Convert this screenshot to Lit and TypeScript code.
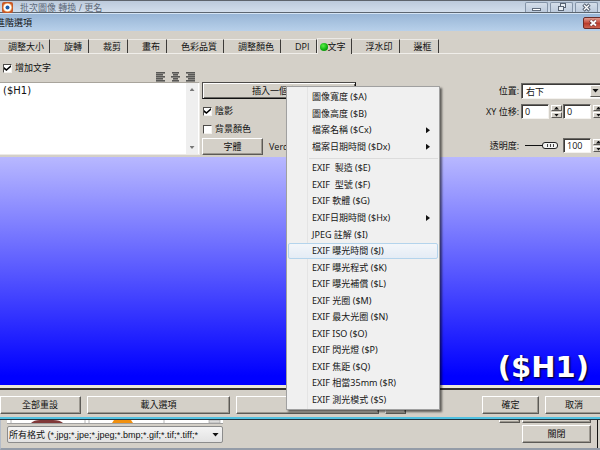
import { LitElement, html, css, svg } from "lit";
import { customElement, property, state } from "lit/decorators.js";
import { classMap } from "lit/directives/class-map.js";

interface MenuEntry {
  text: string;
  sub?: boolean;
  current?: boolean;
}

const IMAGE_ENTRIES: MenuEntry[] = [
  { text: "圖像寬度 ($A)" },
  { text: "圖像高度 ($B)" },
  { text: "檔案名稱 ($Cx)", sub: true },
  { text: "檔案日期時間 ($Dx)", sub: true },
];

const EXIF_ENTRIES: MenuEntry[] = [
  { text: "EXIF  製造 ($E)" },
  { text: "EXIF  型號 ($F)" },
  { text: "EXIF 軟體 ($G)" },
  { text: "EXIF日期時間 ($Hx)", sub: true },
  { text: "JPEG 註解 ($I)" },
  { text: "EXIF 曝光時間 ($J)", current: true },
  { text: "EXIF 曝光程式 ($K)" },
  { text: "EXIF 曝光補償 ($L)" },
  { text: "EXIF 光圈 ($M)" },
  { text: "EXIF 最大光圈 ($N)" },
  { text: "EXIF ISO ($O)" },
  { text: "EXIF 閃光燈 ($P)" },
  { text: "EXIF 焦距 ($Q)" },
  { text: "EXIF 相當35mm ($R)" },
  { text: "EXIF 測光模式 ($S)" },
];

const TABS = ["調整大小", "旋轉", "裁剪", "畫布", "色彩品質", "調整顏色", "DPI", "文字", "浮水印", "邊框"];

const base = css`
  * {
    box-sizing: border-box;
  }
  button,
  input,
  select,
  textarea {
    font: inherit;
    color: inherit;
    margin: 0;
    padding: 0;
    border-radius: 0;
    outline: none;
  }
  .push {
    background: #d4d0c8;
    border: 1px solid;
    border-color: #fff #5c5a56 #5c5a56 #fff;
    box-shadow: inset -1px -1px #9c9890;
    text-align: center;
    white-space: nowrap;
    line-height: 14px;
  }
  .field {
    background: #fff;
    border: 1px solid;
    border-color: #6c6a66 #f4f2ee #f4f2ee #6c6a66;
    box-shadow: inset 1px 1px #3c3a38;
  }
`;

@customElement("variable-menu")
export class VariableMenu extends LitElement {
  static styles = [
    base,
    css`
      :host {
        display: flex;
        flex-direction: column;
        width: 154px;
        height: 324px;
        padding: 2px 1px 1px;
        background: #f0f0f0;
        border: 1px solid #a0a0a0;
        box-shadow: 2px 2px 2px rgba(0, 0, 0, 0.55);
        background-image: linear-gradient(#e4e4e4, #e4e4e4);
        background-size: 1px 100%;
        background-position: 20px 0;
        background-repeat: no-repeat;
      }
      .item {
        flex: 1 1 0;
        min-height: 0;
        display: flex;
        align-items: center;
        justify-content: space-between;
        padding: 0 7px 0 23px;
        border: 1px solid transparent;
        border-radius: 2px;
        background: none;
        text-align: left;
        white-space: pre;
        font: 9px/14px "Noto Sans", "Noto Sans CJK TC", sans-serif;
        color: #161616;
      }
      .current {
        border-color: #b4d4ec;
        background: linear-gradient(#f3f6fa, #e4ecf5);
      }
      .rule {
        flex: none;
        height: 5px;
        margin: 0 0 0 21px;
        border: 0;
        background: linear-gradient(#dcdcdc, #dcdcdc) 0 3px / 100% 1px no-repeat;
      }
      .more {
        width: 4px;
        height: 6px;
        background: #111;
        clip-path: polygon(0 0, 100% 50%, 0 100%);
      }
    `,
  ];

  private entry(e: MenuEntry) {
    return html`<button role="menuitem" class=${classMap({ item: true, current: !!e.current })}>
      <span>${e.text}</span>${e.sub ? html`<span class="more"></span>` : ""}
    </button>`;
  }

  render() {
    return html`${IMAGE_ENTRIES.map((e) => this.entry(e))}
      <hr class="rule" />
      ${EXIF_ENTRIES.map((e) => this.entry(e))}`;
  }
}

@customElement("spin-box")
export class SpinBox extends LitElement {
  @property() value = "0";
  @property() label = "";

  static styles = [
    base,
    css`
      :host {
        display: flex;
        align-items: center;
        gap: 2px;
      }
      .value {
        width: 28px;
        height: 15px;
        padding: 0 3px;
      }
      .arrows {
        display: flex;
        flex-direction: column;
        gap: 1px;
      }
      .step {
        display: grid;
        place-items: center;
        width: 11px;
        height: 6px;
        background: #d4d0c8;
        border: 1px solid;
        border-color: #fff #5c5a56 #5c5a56 #fff;
      }
      .tri {
        width: 5px;
        height: 3px;
        background: #111;
        clip-path: polygon(50% 0, 100% 100%, 0 100%);
      }
      .down {
        clip-path: polygon(0 0, 100% 0, 50% 100%);
      }
    `,
  ];

  render() {
    return html`<input class="field value" aria-label=${this.label} .value=${this.value} />
      <div class="arrows">
        <button class="step" aria-label="+"><span class="tri"></span></button>
        <button class="step" aria-label="-"><span class="tri down"></span></button>
      </div>`;
  }
}

@customElement("app-root")
export class AppRoot extends LitElement {
  @state() private active = "文字";

  static styles = [
    base,
    css`
      :host {
        display: flex;
        flex-direction: column;
        height: 100vh;
        min-height: 420px;
        overflow: hidden;
        background: #d4d0c8;
        color: #111;
        font: 9px/14px "Open Sans", "Noto Sans CJK TC", sans-serif;
      }
      .owner-bar {
        flex: none;
        display: flex;
        height: 13px;
        padding: 1px 2px 0;
        border-top: 1px solid #5e646c;
        border-bottom: 1px solid #5c6670;
        background: linear-gradient(#bccadb, #d2deec);
        color: #5c6878;
      }
      .owner-title {
        flex: 1;
        margin-left: 7px;
        line-height: 11px;
        white-space: nowrap;
      }
      .logo {
        flex: none;
        width: 11px;
        height: 11px;
      }
      .frame-buttons {
        display: flex;
        gap: 2px;
      }
      .frame-button {
        display: grid;
        place-items: center;
        width: 23px;
        height: 10px;
        border: 1px solid #8494a8;
        border-bottom: 0;
        border-radius: 2px 2px 0 0;
        background: linear-gradient(#d4deea, #bccadc);
      }
      .title-bar {
        flex: none;
        display: flex;
        align-items: center;
        justify-content: space-between;
        height: 18px;
        border-top: 1px solid #d4e4f4;
        background: linear-gradient(#98b6d6, #b8d0ea);
      }
      .title {
        margin-left: -4px;
      }
      .close {
        display: grid;
        place-items: center;
        width: 20px;
        height: 12px;
        margin-right: -3px;
        border: 1px solid #6c2c28;
        border-radius: 2px;
        background: linear-gradient(#e09c90, #c44838 50%, #b83828 50%, #cc6450);
      }
      .tabs {
        flex: none;
        display: flex;
        align-items: flex-end;
        height: 23px;
        box-shadow: inset 0 -1px #f0eeea;
      }
      .tab {
        height: 14px;
        margin-bottom: 1px;
        padding: 0 6px 0 14px;
        border: 0 solid;
        border-width: 1px 1px 0 0;
        border-color: #eceae6 #3c3a38 #3c3a38 #eceae6;
        background: none;
        line-height: 13px;
        white-space: nowrap;
      }
      .tab:first-child {
        padding: 0 5px 0 8px;
      }
      .tab.active {
        display: flex;
        align-items: center;
        height: 16px;
        margin-bottom: 0;
        padding: 0 5px 0 2px;
        border-left-width: 1px;
        background: #d4d0c8;
      }
      .dot {
        width: 8px;
        height: 8px;
        border-radius: 50%;
        background: radial-gradient(circle at 40% 35%, #5cf048, #10b010 55%, #087808);
      }
      .panel {
        flex: none;
        display: flex;
        gap: 2px;
        height: 103px;
        margin-right: -3px;
      }
      .text-column {
        flex: none;
        display: flex;
        flex-direction: column;
        width: 200px;
      }
      .text-head {
        display: flex;
        justify-content: space-between;
        align-items: flex-end;
        height: 28px;
        padding: 0 4px 0 3px;
      }
      .aligns {
        display: flex;
        gap: 5px;
      }
      .align {
        display: grid;
        width: 10px;
        height: 10px;
        border: 0;
        background: none;
      }
      .check {
        display: flex;
        align-items: center;
        gap: 3px;
        height: 18px;
      }
      .text-head .check {
        align-self: center;
      }
      .check input {
        appearance: none;
        display: grid;
        place-items: center;
        width: 9px;
        height: 9px;
        background: #fff;
        border: 1px solid;
        border-color: #4c4a48 #f4f2ee #f4f2ee #4c4a48;
      }
      .check input:checked::before {
        content: "";
        width: 7px;
        height: 6px;
        background: #000;
        clip-path: polygon(0 35%, 35% 65%, 100% 0, 100% 35%, 35% 100%, 0 70%);
      }
      .editor {
        display: flex;
        height: 73px;
        background: #fff;
        border: 1px solid;
        border-color: #a8a49c #eceae6 #eceae6;
        border-left: 0;
      }
      .editor textarea {
        flex: 1;
        min-width: 0;
        padding: 1px 3px;
        border: 0;
        background: #fff;
        resize: none;
        overflow: hidden;
        font: 10px/14px "DejaVu Sans", sans-serif;
      }
      .bar {
        display: flex;
        flex-direction: column;
        justify-content: space-between;
        align-items: center;
        width: 12px;
        margin-right: 1px;
        padding: 5px 0;
        background: #efefef;
      }
      .bar-arrow {
        width: 5px;
        height: 3px;
        background: #777;
        clip-path: polygon(50% 0, 100% 100%, 0 100%);
      }
      .bar-arrow.down {
        clip-path: polygon(0 0, 100% 0, 50% 100%);
      }
      .style-column {
        flex: none;
        width: 154px;
        padding-top: 28px;
      }
      .insert {
        position: relative;
        margin-bottom: 3px;
      }
      .insert-button {
        display: block;
        width: 100%;
        height: 17px;
        border-color: #4c4a48 #111 #111 #4c4a48;
        box-shadow: inset 1px 1px #fff, inset -1px -1px #6c6a66;
      }
      .insert variable-menu {
        position: absolute;
        left: 84px;
        top: 4px;
        z-index: 2;
      }
      .style-column .check {
        padding-left: 1px;
      }
      .font-row {
        display: flex;
        align-items: center;
        gap: 6px;
      }
      .font-button {
        width: 61px;
        height: 17px;
      }
      .place-grid {
        display: grid;
        grid-template-columns: auto 40px 40px;
        grid-template-rows: 15px 15px 15px;
        justify-items: start;
        align-items: center;
        align-content: start;
        gap: 6px 2px;
        margin-left: auto;
        padding-top: 29px;
      }
      .place-grid .name {
        justify-self: end;
      }
      .place-grid .last {
        margin-top: 26px;
      }
      .position {
        grid-column: span 2;
        display: flex;
        width: 100%;
        height: 16px;
        padding: 1px;
      }
      .position select {
        flex: 1;
        min-width: 0;
        appearance: none;
        border: 0;
        padding: 0 3px;
        background: none;
      }
      .drop {
        display: grid;
        place-items: center;
        width: 11px;
        background: #d4d0c8;
        border: 1px solid;
        border-color: #fff #5c5a56 #5c5a56 #fff;
        pointer-events: none;
      }
      .drop-arrow {
        width: 7px;
        height: 4px;
        background: #111;
        clip-path: polygon(0 0, 100% 0, 50% 100%);
      }
      .opacity {
        appearance: none;
        width: 33px;
        height: 8px;
        margin-left: 4px;
        background: linear-gradient(#111, #111) 0 3px / 100% 1px no-repeat;
      }
      .opacity::-webkit-slider-thumb {
        appearance: none;
        width: 16px;
        height: 7px;
        border: 1px solid #222;
        border-radius: 3px;
        background: repeating-linear-gradient(90deg, #444 0 1px, #eee 1px 3px) 4px 1px / 7px 3px no-repeat #f4f4f2;
      }
      .preview {
        flex: 1;
        min-height: 0;
        display: flex;
        align-items: flex-end;
        justify-content: flex-end;
        padding: 0 11px 0 0;
        background: linear-gradient(#b8b8ff, #0000ff 96%);
        color: #fff;
        font: bold 29px/36px "DejaVu Sans", sans-serif;
        text-shadow: 1px 1px 2px #000;
      }
      .actions {
        flex: none;
        display: flex;
        gap: 6px;
        height: 35px;
        margin-right: -3px;
        padding-top: 11px;
        border-bottom: 1px solid #203440;
        background: linear-gradient(#ece9d8 0 3px, #35332f 3px 5px, #d4d0c8 5px);
        box-shadow: inset 0 -2px #50c0e0;
      }
      .actions .push {
        height: 18px;
      }
      .reset {
        width: 81px;
        padding-right: 1px;
      }
      .wide {
        width: 143px;
      }
      .small {
        width: 21px;
      }
      .ok {
        width: 57px;
        margin-left: auto;
      }
      .cancel {
        width: 58px;
      }
      .owner-foot {
        flex: none;
        display: flex;
        justify-content: space-between;
        height: 30px;
        padding: 0 7px 0 6px;
        border-bottom: 2px solid #949ca8;
        border-left: 1px solid #b4bcc8;
        box-shadow: inset -2px 0 #d4d0c8, inset -3px 0 #111;
      }
      .thumbs {
        display: flex;
        justify-content: space-around;
        width: 216px;
        height: 4px;
        background: #fff;
        border-bottom: 1px solid #a0a0a0;
      }
      .thumbs svg {
        width: 100%;
        height: 3px;
      }
      .filter {
        display: flex;
        align-items: center;
        width: 216px;
        height: 17px;
        margin-top: 2px;
        padding-right: 3px;
        border: 1px solid #8c8c8c;
        border-radius: 2px;
        background: linear-gradient(#f4f4f4, #e2e2e2);
      }
      .filter select {
        flex: 1;
        min-width: 0;
        appearance: none;
        border: 0;
        padding: 0 1px;
        background: none;
        font: 9px/14px "Liberation Sans", "Noto Sans CJK TC", sans-serif;
      }
      .foot-buttons {
        display: grid;
        grid-template-columns: 21px 69px;
        grid-template-rows: 3px 18px;
        gap: 2px;
        padding-right: 2px;
      }
      .stub {
        min-height: 0;
        height: 3px;
        border-top: 0;
      }
      .quit {
        grid-column: 2;
      }
    `,
  ];

  private alignIcon(starts: number[], widths: number[]) {
    return html`<svg width="10" height="10" viewBox="0 0 10 10" fill="#585856">
      ${starts.map((x, i) => svg`<rect x=${x} y=${i * 2} width=${widths[i]} height="1.6" />`)}
    </svg>`;
  }

  render() {
    return html`
      <header class="owner-bar">
        <svg class="logo" viewBox="0 0 11 11">
          <rect width="11" height="11" rx="2" fill="#c85828" />
          <circle cx="5.5" cy="5.5" r="4.6" fill="#f0b070" />
          <circle cx="5.5" cy="5.5" r="3.7" fill="#fff" />
          <circle cx="5.5" cy="5.5" r="2" fill="#1c5ca8" />
        </svg>
        <span class="owner-title">批次圖像 轉換 / 更名</span>
        <div class="frame-buttons">
          <button class="frame-button" aria-label="最小化">
            <svg width="9" height="9"><rect x="0.5" y="5.5" width="8" height="2" fill="#fff" stroke="#606c7c" /></svg>
          </button>
          <button class="frame-button" aria-label="還原">
            <svg width="10" height="9" fill="#e8eef4" stroke="#566272">
              <rect x="3.5" y="0.5" width="5" height="4" /><rect x="1.5" y="3.5" width="5" height="4" />
            </svg>
          </button>
          <button class="frame-button" aria-label="關閉視窗">
            <svg width="9" height="9">
              <path d="M1.5 1.5 7.5 7.5M7.5 1.5 1.5 7.5" stroke="#566272" stroke-width="3.4" />
              <path d="M2 2 7 7M7 2 2 7" stroke="#fff" stroke-width="1.3" />
            </svg>
          </button>
        </div>
      </header>

      <div class="title-bar">
        <span class="title">進階選項</span>
        <button class="close" aria-label="關閉對話方塊">
          <svg width="9" height="8">
            <path d="M1 1.5 7 6.5M7 1.5 1 6.5" stroke="#6c3838" stroke-width="3" />
            <path d="M1.5 1.5 7 6.5M7 1.5 1.5 6.5" stroke="#fff" stroke-width="1.8" />
          </svg>
        </button>
      </div>

      <nav class="tabs" role="tablist">
        ${TABS.map(
          (t) => html`<button
            role="tab"
            class=${classMap({ tab: true, active: t === this.active })}
            @click=${() => (this.active = t)}
          >
            ${t === this.active ? html`<span class="dot"></span>` : ""}<span>${t}</span>
          </button>`
        )}
      </nav>

      <section class="panel">
        <div class="text-column">
          <div class="text-head">
            <label class="check"><input type="checkbox" checked />增加文字</label>
            <div class="aligns">
              <button class="align" aria-label="靠左">${this.alignIcon([0, 0, 0, 0, 0], [9, 7, 9, 7, 9])}</button>
              <button class="align" aria-label="置中">${this.alignIcon([1, 2, 0, 2, 1], [7, 5, 9, 5, 7])}</button>
              <button class="align" aria-label="靠右">${this.alignIcon([0, 2, 0, 2, 0], [9, 7, 9, 7, 9])}</button>
            </div>
          </div>
          <div class="editor">
            <textarea aria-label="文字" .value=${"($H1)"}></textarea>
            <div class="bar"><span class="bar-arrow"></span><span class="bar-arrow down"></span></div>
          </div>
        </div>

        <div class="style-column">
          <div class="insert">
            <button class="push insert-button" aria-haspopup="menu">插入一個變數</button>
            <variable-menu role="menu"></variable-menu>
          </div>
          <label class="check"><input type="checkbox" checked />陰影</label>
          <label class="check"><input type="checkbox" />背景顏色</label>
          <div class="font-row"><button class="push font-button">字體</button><span>Verdana</span></div>
        </div>

        <div class="place-grid">
          <label class="name" for="position">位置:</label>
          <div class="field position">
            <select id="position"><option>右下</option></select>
            <span class="drop"><span class="drop-arrow"></span></span>
          </div>
          <span class="name">XY 位移:</span>
          <spin-box label="X 位移" value="0"></spin-box>
          <spin-box label="Y 位移" value="0"></spin-box>
          <label class="name last" for="opacity">透明度:</label>
          <input class="opacity last" id="opacity" type="range" min="0" max="100" value="100" />
          <spin-box class="last" label="透明度" value="100"></spin-box>
        </div>
      </section>

      <div class="preview">($H1)</div>

      <div class="actions">
        <button class="push reset">全部重設</button>
        <button class="push wide">載入選項</button>
        <button class="push wide" aria-label="儲存選項"></button>
        <button class="push small" aria-label="更多"></button>
        <button class="push ok">確定</button>
        <button class="push cancel">取消</button>
      </div>

      <footer class="owner-foot">
        <div>
          <div class="thumbs">
            <svg viewBox="0 0 216 3" preserveAspectRatio="none">
              <path d="M24 3Q27 0 33 0H46Q53 0 56 3Z" fill="#803838" />
              <path d="M105 3 107 0H124L126 3Z" fill="#f09010" />
              <path d="M4 0V3M78 0V3M82 0V3M157 0V3" stroke="#b4b4b4" />
              <rect x="202" width="11" height="3" fill="#dcdcdc" stroke="#999" stroke-width="0.6" />
            </svg>
          </div>
          <div class="filter">
            <select aria-label="檔案類型">
              <option>所有格式 (*.jpg;*.jpe;*.jpeg;*.bmp;*.gif;*.tif;*.tiff;*</option>
            </select>
            <span class="drop-arrow"></span>
          </div>
        </div>
        <div class="foot-buttons">
          <button class="push stub" aria-label="瀏覽"></button>
          <button class="push stub" aria-label="開始"></button>
          <button class="push quit">關閉</button>
        </div>
      </footer>
    `;
  }
}
